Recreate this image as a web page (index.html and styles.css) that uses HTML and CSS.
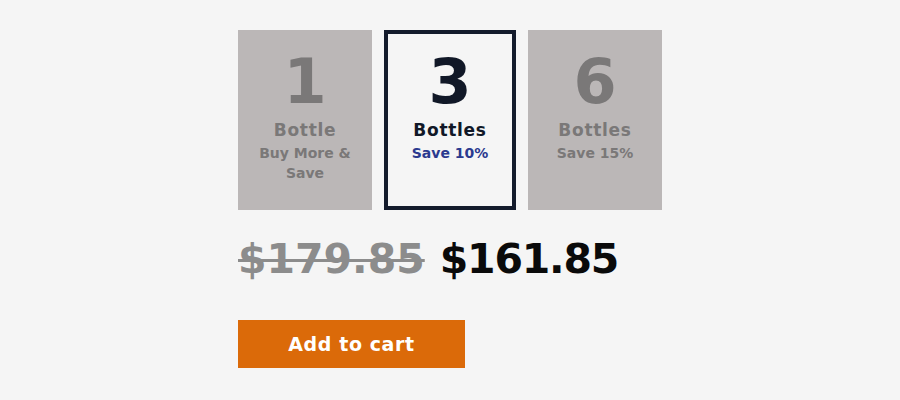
FILE: index.html
```html
<!DOCTYPE html>
<html>
<head>
<meta charset="utf-8">
<link rel="stylesheet" href="styles.css">
</head>
<body>
<div class="wrap">
  <div class="options">
    <div class="opt">
      <div class="num">1</div>
      <div class="unit">Bottle</div>
      <div class="save">Buy More &amp;<br>Save</div>
    </div>
    <div class="opt active">
      <div class="num">3</div>
      <div class="unit">Bottles</div>
      <div class="save">Save 10%</div>
    </div>
    <div class="opt">
      <div class="num">6</div>
      <div class="unit">Bottles</div>
      <div class="save">Save 15%</div>
    </div>
  </div>
  <div class="prices">
    <span class="old">$179.85</span>
    <span class="new">$161.85</span>
  </div>
  <button class="cart">Add to cart</button>
</div>
</body>
</html>
```
FILE: styles.css
```css
html, body {
  margin: 0;
  padding: 0;
  background: #f5f5f5;
  font-family: "DejaVu Sans", "Open Sans", sans-serif;
}
.wrap {
  width: 424px;
  margin: 0 auto;
  padding-top: 30px;
}
.options {
  display: grid;
  grid-template-columns: 134px 132px 134px;
  gap: 12px;
}
.opt {
  height: 180px;
  box-sizing: border-box;
  background: #bbb7b7;
  color: #7a7878;
  text-align: center;
  padding-top: 19px;
}
.opt.active {
  background: #f5f5f5;
  border: 4px solid #141b2c;
  color: #111827;
  padding-top: 15px;
}
.num {
  font-size: 62px;
  font-weight: bold;
  line-height: 66px;
}
.unit {
  font-size: 17px;
  font-weight: bold;
  letter-spacing: 0.7px;
  margin-top: 4px;
  line-height: 22px;
}
.save {
  font-size: 14px;
  font-weight: bold;
  line-height: 20px;
  margin-top: 2px;
}
.opt.active .save {
  color: #2b3a8f;
}
.prices {
  margin-top: 19px;
  display: flex;
  gap: 15px;
  align-items: baseline;
  font-size: 41px;
  font-weight: bold;
  line-height: 60px;
}
.old {
  color: #8c8c8c;
  text-decoration: line-through;
  text-decoration-thickness: 3px;
}
.new {
  color: #0a0a0a;
  letter-spacing: -1.2px;
}
.cart {
  display: block;
  margin-top: 31px;
  width: 227px;
  height: 48px;
  border: none;
  background: #db6a09;
  color: #fff;
  font-family: inherit;
  font-size: 19px;
  font-weight: bold;
  letter-spacing: 0.6px;
  padding: 0;
}
```
